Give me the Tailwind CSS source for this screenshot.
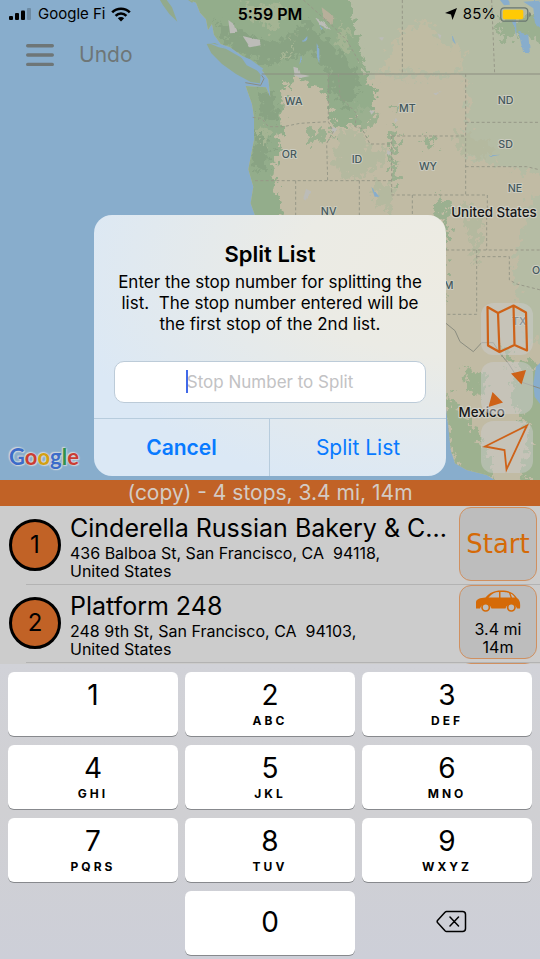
<!DOCTYPE html>
<html lang="en">
<head>
<meta charset="utf-8">
<meta name="viewport" content="width=device-width, initial-scale=1">
<title>Split List</title>
<script src="https://cdn.jsdelivr.net/npm/@tailwindcss/browser@4"></script>
</head>
<body class="bg-[#cccccc] font-['Inter','Liberation_Sans',sans-serif] text-black">
<div class="flex min-h-screen flex-col overflow-hidden">

  <section class="relative isolate flex grow flex-col overflow-hidden bg-[#88adcc]">
    <!-- Map -->
    <svg class="absolute inset-0 -z-10 h-full w-full" viewBox="0 0 540 480" preserveAspectRatio="xMidYMid slice" aria-label="Map of the western United States">
      <defs>
        <filter id="rough" x="-5%" y="-5%" width="110%" height="110%" color-interpolation-filters="sRGB">
          <feTurbulence type="fractalNoise" baseFrequency="0.06" numOctaves="3" seed="4" result="n"/>
          <feDisplacementMap in="SourceGraphic" in2="n" scale="8" xChannelSelector="R" yChannelSelector="G"/>
        </filter>
        <filter id="soft" x="-10%" y="-10%" width="120%" height="120%" color-interpolation-filters="sRGB">
          <feTurbulence type="fractalNoise" baseFrequency="0.05" numOctaves="4" seed="9" result="n"/>
          <feDisplacementMap in="SourceGraphic" in2="n" scale="70" xChannelSelector="R" yChannelSelector="G" result="d"/>
          <feGaussianBlur in="d" stdDeviation="1.500"/>
        </filter>
        <clipPath id="land">
          <path d="M-30 0L-12 8 0 38 18 58 24 90 36 72 42 104 62 132 90 142 130 170 182 205 205 238 211 292 198 262 137 258 156 312 162 350 162 420 145 508 160 560 152 610 168 655 200 760 300 900 420 1000 540 1160 640 1230 738 1225 745 1280 752 1350 765 1390 800 1410 860 1425 900 1450H1030V0Z"/>
        </clipPath>
      </defs>
      <g transform="scale(.33333) translate(600 0)">
        <path fill="#92aa8d" d="M-120 0H-100L-84 22-68 65-92 42-112 14ZM-36 0h24l-12 8ZM20 132L45 129 84 150 122 172 160 198 182 224 180 250 152 246 108 222 66 192 34 160Z"/>
        <g clip-path="url(#land)">
          <path fill="#c1bba4" d="M-60 0H1030V1460H-60Z"/>
          <g filter="url(#soft)">
            <path fill="#b5bca4" d="M440 -60H1090V232H500L460 170ZM800 222H1090V540L950 510 800 480ZM990 590H1090V1060L970 1010 940 800Z"/>
            <path fill="#93ad8b" d="M-90 -60H440L470 110 500 230 530 300 490 360 440 385 400 375 385 300 350 262 300 235 250 262 248 320 246 400 220 520 245 640 250 700H90V250L-90 60Z"/>
            <path fill="#c0bca3" d="M600 100L680 60 730 130 800 150 780 215 540 218Z"/>
            <path fill="#86a080" fill-opacity=".75" d="M40 60L120 90 200 130 270 110 320 60 380 120 450 180 480 270 440 330 400 280 380 200 330 150 260 180 190 190 100 150ZM170 270L230 290 230 370 180 350ZM170 390L210 420 190 520 155 500Z"/>
            <path fill="#a4b493" d="M130 10L260 20 230 90 150 60ZM290 90L270 160 240 190 280 120ZM180 380L205 390 200 440 180 430ZM420 60L450 120 440 170 415 120Z"/>
            <path fill="#9bb090" d="M470 310L540 340 500 400 480 360ZM400 400L470 440 460 480 420 460ZM320 400L370 380 390 410 330 440ZM570 380L595 400 585 480 595 540 575 560 570 450ZM670 400L710 420 700 445 670 430ZM560 310L600 320 590 340ZM710 580L750 610 735 680 705 640ZM890 60L1090 40V150L960 110 900 120ZM720 610L750 690 735 720 740 900 715 880Z"/>
            <path fill="#b4b99f" d="M410 400L480 390 500 440 560 450 540 500 450 540 400 490ZM760 400L880 430 850 480 780 460ZM530 540L580 560 570 640 520 600ZM790 600L850 650 830 800 800 700Z"/>
            <path fill="#9db18f" d="M740 1170L790 1240 850 1330 890 1440 830 1430 770 1400 735 1290ZM960 1080L1090 1120V1460L960 1440 990 1300 930 1200ZM790 1100L860 1120 850 1190 810 1180ZM900 1030L940 1060 930 1100Z"/>
          </g>
          <g filter="url(#rough)">
            <path fill="#bcbcb8" d="M85 60L105 75 112 98 90 100ZM128 108L178 120 182 136 150 142ZM280 200L296 205 302 222 330 228 300 234 284 226ZM345 52L375 70 390 90 360 74ZM535 112L552 112 546 122ZM712 100L724 106 720 118ZM318 566L332 574 316 602 310 596ZM392 380L412 386 400 402ZM560 450L574 456 566 468ZM700 280L726 274 706 286ZM508 330L524 334 514 344ZM580 354L594 358 586 370Z"/>
            <path fill="#b7af9a" d="M365 22L400 48 398 76 370 54Z"/>
            <path fill="#88adcc" d="M350 130L358 145 358 190 351 170ZM303 165L306 180 298 194ZM322 108L322 122 306 126ZM356 74L370 88 362 90ZM755 100L768 134 758 122ZM514 560L538 590 524 590ZM868 466L902 464 870 470ZM935 60L950 110 948 60ZM955 95L985 105 990 160 970 158ZM970 5L1050 0V110L1005 70 1000 25ZM900 0L925 0 930 14 912 16Z"/>
          </g>
          <path fill="#88adcc" d="M1030 1080L1008 1100 1000 1150 1004 1190 1030 1225Z"/>
        </g>
        <path fill="#88adcc" d="M120 166L150 178 190 206 180 216 140 196ZM24 128L60 136 78 146 56 142Z"/>
        <g fill="none" stroke="#8b8d7f" stroke-width="3">
          <path d="M185 222H1030M185 226L192 236 182 256 136 248M738 970L765 992 780 1025 820 1055 845 1028 880 1028 900 1060 925 1090 960 1145 1020 1165"/>
          <path stroke="#979888" stroke-dasharray="9 7" d="M607 0V222M875 0L884 222M797 222V585M797 367H1030M797 500H980L1030 512M575 408H797M575 408V585H862V640M165 542H575M287 542V680M478 542V680M637 585V680M385 222V365M158 352L185 355 205 380H250L300 370 385 365 400 395 380 430 383 542M415 222L420 290 470 340 465 380 485 385 510 432H575M310 0L400 80 440 120 480 190M860 650V750M738 750H1030M830 750V943H738M830 770H928V840L950 852 1030 872"/>
        </g>
        <g font-size="32" font-weight="500" fill="#44585c" text-anchor="middle" stroke="#ccccc0" stroke-width="6" stroke-linejoin="round" paint-order="stroke">
          <text x="281" y="315">WA</text><text x="622" y="336">MT</text><text x="917" y="311">ND</text>
          <text x="268" y="475">OR</text><text x="471" y="489">ID</text><text x="684" y="509">WY</text>
          <text x="917" y="444">SD</text><text x="945" y="575">NE</text><text x="386" y="646">NV</text>
          <text x="958" y="974">TX</text><text x="1008" y="821">O</text><text x="746" y="867">M</text>
        </g>
        <g font-size="40" font-weight="500" fill="#161616" text-anchor="middle" stroke="#d0d0c6" stroke-width="7" stroke-linejoin="round" paint-order="stroke">
          <text x="882" y="651">United States</text><text x="845" y="1250">Mexico</text>
        </g>
      </g>
    </svg>

    <!-- Status bar -->
    <header class="grid grid-cols-3 items-center px-2 pt-1 text-[15px] leading-5">
      <div class="flex items-center gap-[6px]">
        <svg class="h-3 w-6" viewBox="0 0 24 12" aria-hidden="true"><rect x="1" y="8" width="4" height="4" rx="1"/><rect x="7" y="5" width="4" height="7" rx="1"/><rect x="13" y="2.500" width="4" height="9.500" rx="1"/><rect x="19" y="0" width="4" height="12" rx="1" fill="#6d8ba4"/></svg>
        <span class="whitespace-nowrap">Google Fi</span>
        <svg class="h-[15px] w-5" viewBox="0 0 20 15" fill="none" stroke="#000" stroke-width="2.600" aria-hidden="true"><path d="M1.200 5.300a12.500 12.500 0 0 1 17.600 0M4.600 8.800a7.600 7.600 0 0 1 10.800 0"/><path fill="#000" stroke="none" d="M6.800 11.200a4.600 4.600 0 0 1 6.400 0L10 14.600Z"/></svg>
      </div>
      <span class="text-center text-base leading-5 font-semibold">5:59 PM</span>
      <div class="flex items-center justify-end gap-1">
        <svg class="mr-0.5 h-3 w-3" viewBox="0 0 12 12" aria-hidden="true"><path d="M12 0L7.500 12 6 6.500 0 5Z"/></svg>
        <span>85%</span>
        <svg class="h-[15px] w-8" viewBox="0 0 32 15" aria-hidden="true"><rect x=".8" y=".8" width="27" height="13.400" rx="3.500" fill="none" stroke="#6a7770" stroke-width="1.300"/><rect x="2.800" y="2.800" width="20.500" height="9.400" rx="1.800" fill="#ffca05"/><path fill="#6a7770" d="M29.300 5c2 .8 2 4.200 0 5Z"/></svg>
      </div>
    </header>

    <!-- Toolbar -->
    <nav class="flex items-center gap-[25px] px-[26px] pt-4 text-[#6e7677]">
      <button type="button" aria-label="Menu"><svg class="h-6 w-7" viewBox="0 0 28 24" fill="none" stroke="#6e7677" stroke-width="3.400" stroke-linecap="round"><path d="M1.700 2.700H26.300M1.700 12H26.300M1.700 21.400H26.300"/></svg></button>
      <button type="button" class="text-[21px] leading-[30px]">Undo</button>
    </nav>

    <!-- Map controls -->
    <div class="absolute right-[7px] bottom-[7px] flex flex-col gap-[7px]">
      <button type="button" aria-label="Map type" class="size-[52px] rounded-xl bg-[#cccccc]/50"><svg viewBox="0 0 52 52" fill="none" stroke="#ce6218" stroke-width="2.200" stroke-linejoin="round"><path d="M6.500 4L17 10 32.500 2.500 45 9.500 46 47.500 33.500 42 18.500 49 7 42.500ZM17 10L18.500 49M32.500 2.500L33.500 42"/></svg></button>
      <button type="button" aria-label="Zoom to fit" class="size-[52px] rounded-xl bg-[#cccccc]/50"><svg viewBox="0 0 52 52" fill="#ce6218"><path d="M30 11.500L45 8 40.500 22.500ZM11.500 30L22 40.500 7.500 45Z"/></svg></button>
      <button type="button" aria-label="Current location" class="size-[52px] rounded-xl bg-[#cccccc]/50"><svg viewBox="0 0 52 52" fill="none" stroke="#ce6218" stroke-width="1.800"><path d="M46 4.500L4 25.500 23.500 29 25.500 48.500Z"/></svg></button>
    </div>

    <p class="absolute bottom-2 left-[9px] font-['Lato',sans-serif] text-[22px] leading-[30px] font-bold [text-shadow:0_0_2px_#cfd6db,0_0_2px_#cfd6db,1px_1px_1px_#cfd6db,-1px_-1px_1px_#cfd6db]"><span class="text-[#3c6cc9]">G</span><span class="text-[#cb3d33]">o</span><span class="text-[#d3a011]">o</span><span class="text-[#3c6cc9]">g</span><span class="text-[#30914a]">l</span><span class="text-[#cb3d33]">e</span></p>

    <!-- Dialog -->
    <form role="dialog" aria-labelledby="dialog-title" class="absolute inset-x-0 bottom-1 mx-auto w-[352px] max-w-full overflow-hidden rounded-[18px] bg-[radial-gradient(ellipse_at_100%_20%,#edebe2_0%,#ebebe5_30%,#dbe8f5_78%)]">
      <div class="px-5 pt-[25px] pb-[15px] text-center">
        <h1 id="dialog-title" class="text-[22px] leading-[28px] font-semibold">Split List</h1>
        <label for="stop" class="block pt-1 text-[17px] leading-[21px] whitespace-pre">Enter the stop number for splitting the
list.  The stop number entered will be
the first stop of the 2nd list.</label>
        <div class="relative mt-[26px]">
          <input id="stop" type="text" inputmode="numeric" placeholder="Stop Number to Split" class="block h-[42px] w-full rounded-[10px] border border-[#bccbd8] bg-white text-center text-[17px] caret-[#3f67e6] outline-none placeholder:text-[#c2c2c4]">
          <span class="absolute top-[9px] left-[72px] h-[23px] w-0.5 bg-[#4169e8]" aria-hidden="true"></span>
        </div>
      </div>
      <div class="grid grid-cols-2 border-t border-[#b7ccdd] text-[21px] text-[#087aff]">
        <button type="button" class="h-[57px] border-r border-[#b7ccdd] font-semibold">Cancel</button>
        <button type="submit" class="h-[57px]">Split List</button>
      </div>
    </form>
  </section>

  <!-- Route -->
  <h2 class="bg-[#c16226] text-center text-[21px] leading-[26px] text-[#d4cbc4]">(copy) - 4 stops, 3.4 mi, 14m</h2>
  <ol class="h-[158px] overflow-hidden bg-[#cccccc]">
    <li class="flex h-[78px] items-center gap-[9px] pr-[3px] pl-[9px]">
      <span class="flex size-[52px] shrink-0 items-center justify-center rounded-full border-[3px] border-black bg-[#c16226] text-2xl">1</span>
      <div class="min-w-0 grow pt-0.5">
        <h3 class="truncate text-[25px] leading-[32px]">Cinderella Russian Bakery &amp; C...</h3>
        <p class="text-base leading-[18px] whitespace-pre">436 Balboa St, San Francisco, CA  94118,
United States</p>
      </div>
      <button type="button" class="mb-0.5 h-[74px] w-[78px] shrink-0 rounded-xl border border-[#d09060] bg-[#bdbdbd] font-['DejaVu_Sans',sans-serif] text-[26px] text-[#d56a07]">Start</button>
    </li>
    <li class="relative flex h-[78px] items-center gap-[9px] pr-[3px] pl-[9px] before:absolute before:top-0 before:right-0 before:left-[26px] before:h-px before:bg-[#b3b3b3]">
      <span class="flex size-[52px] shrink-0 items-center justify-center rounded-full border-[3px] border-black bg-[#c16226] text-2xl">2</span>
      <div class="min-w-0 grow pt-0.5">
        <h3 class="truncate text-[25px] leading-[32px]">Platform 248</h3>
        <p class="text-base leading-[18px] whitespace-pre">248 9th St, San Francisco, CA  94103,
United States</p>
      </div>
      <button type="button" class="relative mb-0.5 flex h-[74px] w-[78px] shrink-0 flex-col items-center rounded-xl border border-[#d09060] bg-[#bdbdbd] pt-1 text-base leading-[18px]">
        <svg class="mb-2 h-[22px] w-[46px] shrink-0" viewBox="0 0 46 22" aria-hidden="true"><path fill="#d56a07" d="M1 18.500V12C1.500 9 5 8 10.500 7.500 15 2.500 19 .5 26 .5 34 .5 38 2 42 8 45 10 45.500 13 45 18.500H42A6 6 0 0 0 30.500 18.500H16.500A6 6 0 0 0 5 18.500Z"/><path fill="#bdbdbd" d="M13.500 7.500C17 3.500 20 2 24 2V7.500ZM25.500 2C31 2 33 2.500 34 3L35.500 7.500H25.500ZM35.500 3.500C37.500 4.500 39 6 40 7.500H37Z"/><g fill="#bdbdbd" stroke="#d56a07" stroke-width="1.700"><circle cx="10.700" cy="17.300" r="3.700"/><circle cx="36.300" cy="17.300" r="3.700"/></g></svg>
        <span>3.4 mi</span><span>14m</span>
      </button>
    </li>
    <li class="relative flex h-[78px] justify-end pt-px pr-[3px] before:absolute before:top-0 before:right-0 before:left-[26px] before:h-px before:bg-[#b3b3b3]">
      <span class="h-[74px] w-[78px] rounded-xl border border-[#d09060] bg-[#bdbdbd]"></span>
    </li>
  </ol>

  <!-- Keypad -->
  <div class="grid grid-cols-3 gap-x-[7px] gap-y-[9px] bg-linear-to-b from-[#d1d2d8] via-[#d0d0d3] to-[#cdcfd8] px-2 pt-2 pb-1 text-[28px] leading-[36px]">
    <button type="button" class="flex h-16 flex-col items-center rounded-md bg-white pt-[5px] shadow-[0_1px_0_#87898d]">1</button>
    <button type="button" class="flex h-16 flex-col items-center rounded-md bg-white pt-[5px] shadow-[0_1px_0_#87898d]">2<span class="text-xs leading-4 font-bold tracking-[3px]">ABC</span></button>
    <button type="button" class="flex h-16 flex-col items-center rounded-md bg-white pt-[5px] shadow-[0_1px_0_#87898d]">3<span class="text-xs leading-4 font-bold tracking-[3px]">DEF</span></button>
    <button type="button" class="flex h-16 flex-col items-center rounded-md bg-white pt-[5px] shadow-[0_1px_0_#87898d]">4<span class="text-xs leading-4 font-bold tracking-[3px]">GHI</span></button>
    <button type="button" class="flex h-16 flex-col items-center rounded-md bg-white pt-[5px] shadow-[0_1px_0_#87898d]">5<span class="text-xs leading-4 font-bold tracking-[3px]">JKL</span></button>
    <button type="button" class="flex h-16 flex-col items-center rounded-md bg-white pt-[5px] shadow-[0_1px_0_#87898d]">6<span class="text-xs leading-4 font-bold tracking-[3px]">MNO</span></button>
    <button type="button" class="flex h-16 flex-col items-center rounded-md bg-white pt-[5px] shadow-[0_1px_0_#87898d]">7<span class="text-xs leading-4 font-bold tracking-[3px]">PQRS</span></button>
    <button type="button" class="flex h-16 flex-col items-center rounded-md bg-white pt-[5px] shadow-[0_1px_0_#87898d]">8<span class="text-xs leading-4 font-bold tracking-[3px]">TUV</span></button>
    <button type="button" class="flex h-16 flex-col items-center rounded-md bg-white pt-[5px] shadow-[0_1px_0_#87898d]">9<span class="text-xs leading-4 font-bold tracking-[3px]">WXYZ</span></button>
    <button type="button" class="col-start-2 flex h-16 items-center justify-center rounded-md bg-white pb-0.5 shadow-[0_1px_0_#87898d]">0</button>
    <button type="button" aria-label="Delete" class="flex h-16 items-center justify-center pb-[3px] pl-2"><svg class="h-[23px] w-[31px]" viewBox="0 0 31 23" fill="none" stroke="#000" stroke-width="1.500" stroke-linecap="round" stroke-linejoin="round"><path d="M10.500 1.500H26.500Q29.500 1.500 29.500 4.500V18.500Q29.500 21.500 26.500 21.500H10.500Q9.800 21.500 9 20.700L1.500 12.500Q.8 11.500 1.500 10.500L9 2.300Q9.800 1.500 10.500 1.500ZM14 7L22.500 16M22.500 7L14 16"/></svg></button>
  </div>
</div>
</body>
</html>
